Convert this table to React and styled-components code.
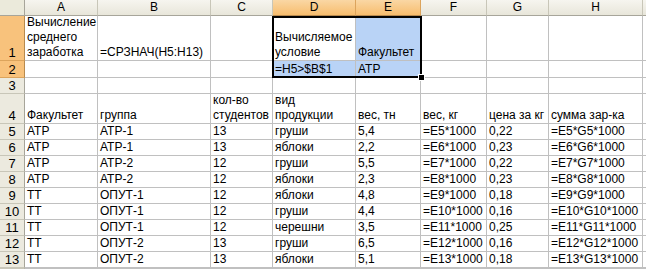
import React from 'react';
import styled, { createGlobalStyle } from 'styled-components';

const GlobalStyle = createGlobalStyle`
html, body {
margin: 0;
padding: 0;
background: #ffffff;
overflow: hidden;
}
`;

const COLS = ['A', 'B', 'C', 'D', 'E', 'F', 'G', 'H', ''];

const data = [
    ['Вычисление среднего заработка', '=СРЗНАЧ(H5:H13)', '', 'Вычисляемое условие', 'Факультет', '', '', '', ''],
    ['', '', '', '=H5>$B$1', 'АТР', '', '', '', ''],
    ['', '', '', '', '', '', '', '', ''],
    ['Факультет', 'группа', 'кол-во студентов', 'вид продукции', 'вес, тн', 'вес, кг', 'цена за кг', 'сумма зар-ка', ''],
    ['АТР', 'АТР-1', '13', 'груши', '5,4', '=E5*1000', '0,22', '=E5*G5*1000', ''],
    ['АТР', 'АТР-1', '13', 'яблоки', '2,2', '=E6*1000', '0,23', '=E6*G6*1000', ''],
    ['АТР', 'АТР-2', '12', 'груши', '5,5', '=E7*1000', '0,22', '=E7*G7*1000', ''],
    ['АТР', 'АТР-2', '12', 'яблоки', '2,3', '=E8*1000', '0,23', '=E8*G8*1000', ''],
    ['ТТ', 'ОПУТ-1', '12', 'яблоки', '4,8', '=E9*1000', '0,18', '=E9*G9*1000', ''],
    ['ТТ', 'ОПУТ-1', '12', 'груши', '4,4', '=E10*1000', '0,16', '=E10*G10*1000', ''],
    ['ТТ', 'ОПУТ-1', '12', 'черешни', '3,5', '=E11*1000', '0,25', '=E11*G11*1000', ''],
    ['ТТ', 'ОПУТ-2', '13', 'груши', '6,5', '=E12*1000', '0,16', '=E12*G12*1000', ''],
    ['ТТ', 'ОПУТ-2', '13', 'яблоки', '5,1', '=E13*1000', '0,18', '=E13*G13*1000', ''],
    ['', '', '', '', '', '', '', '', ''],
];

// selected range D1:E2, D1 is the active cell
const isSelected = (r, c) => r <= 1 && (c === 3 || c === 4);
const isActive = (r, c) => r === 0 && c === 3;

const App = () => {
    return (
        <>
            <GlobalStyle />
            <Sheet>
                <Corner />
                {COLS.map((col, i) => (
                    <ColHead key={i} $active={i === 3 || i === 4}>{col}</ColHead>
                ))}
                {data.map((row, r) => (
                    <React.Fragment key={r}>
                        <RowHead $active={r <= 1}>{r < 13 ? r + 1 : ''}</RowHead>
                        {row.map((value, c) => (
                            <Cell
                                key={c}
                                $selected={isSelected(r, c) && !isActive(r, c)}
                                $wrap={r === 0 || r === 3}
                            >
                                {value}
                            </Cell>
                        ))}
                    </React.Fragment>
                ))}
                <Selection>
                    <FillHandle />
                </Selection>
            </Sheet>
        </>
    );
};

export default App;

const Sheet = styled.div`
position: relative;
display: grid;
grid-template-columns: 25px 73px 113px 62px 83px 65px 66px 62px 94px 1fr;
grid-template-rows: 16px 45px 17px 16px 30px repeat(9, 16px) 1fr;
width: 646px;
height: 269px;
overflow: hidden;
font-family: "Liberation Sans", Arial, sans-serif;
font-size: 12px;
color: #000000;
`;

const Corner = styled.div`
box-sizing: border-box;
background: #ebeadb;
border-right: 1px solid #a7a59a;
border-bottom: 1px solid #a7a59a;
`;

const ColHead = styled.div`
box-sizing: border-box;
display: flex;
align-items: center;
justify-content: center;
background: ${(p) => (p.$active ? 'linear-gradient(#fad7a4, #f7bd6e)' : 'linear-gradient(#f6f5ef, #e8e6da)')};
border-right: 1px solid ${(p) => (p.$active ? '#dca45c' : '#c8c6b8')};
border-bottom: 1px solid ${(p) => (p.$active ? '#b88a4e' : '#a7a59a')};
line-height: 15px;
`;

const RowHead = styled.div`
box-sizing: border-box;
display: flex;
align-items: flex-end;
justify-content: center;
background: ${(p) => (p.$active ? '#f8c27c' : '#eceadf')};
border-right: 1px solid ${(p) => (p.$active ? '#b88a4e' : '#a7a59a')};
border-bottom: 1px solid ${(p) => (p.$active ? '#dca45c' : '#c8c6b8')};
line-height: 15px;
font-size: 13px;
`;

const Cell = styled.div`
box-sizing: border-box;
display: flex;
align-items: flex-end;
padding: 0 2px 0 2px;
background: ${(p) => (p.$selected ? '#b9d3f6' : '#ffffff')};
border-right: 1px solid #c0c0c0;
border-bottom: 1px solid #c0c0c0;
line-height: 15px;
white-space: ${(p) => (p.$wrap ? 'normal' : 'nowrap')};
overflow: visible;
`;

const Selection = styled.div`
position: absolute;
left: 272px;
top: 16px;
width: 150px;
height: 62px;
box-sizing: border-box;
border: 2px solid #000000;
pointer-events: none;
`;

const FillHandle = styled.div`
position: absolute;
right: -5px;
bottom: -5px;
width: 5px;
height: 5px;
background: #000000;
border: 1px solid #ffffff;
`;
